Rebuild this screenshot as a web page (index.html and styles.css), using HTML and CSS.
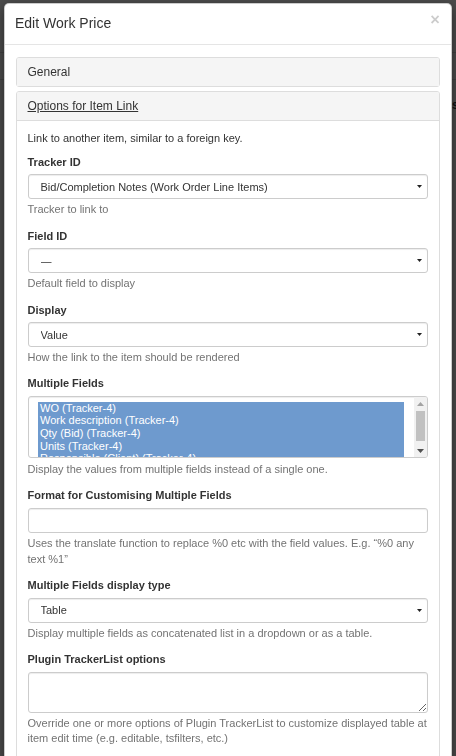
FILE: index.html
```html
<!DOCTYPE html>
<html lang="en">
<head>
<meta charset="utf-8">
<title>Edit Work Price</title>
<link rel="stylesheet" href="styles.css">
</head>
<body>
<!-- tracker page underneath the dialog -->
<div class="page">
  <div class="page-row"></div>
  <div class="page-row"></div>
  <div class="page-col-head">s</div>
</div>
<div class="backdrop"></div>

<div class="modal">
  <div class="modal-header">
    <h4 class="modal-title">Edit Work Price</h4>
    <button class="close" type="button">×</button>
  </div>

  <div class="modal-body">
    <div class="panel">
      <div class="panel-heading">General</div>
    </div>

    <div class="panel">
      <div class="panel-heading panel-heading-open"><a href="#">Options for Item Link</a></div>
      <div class="panel-body">
        <p class="intro">Link to another item, similar to a foreign key.</p>

        <div class="form-group">
          <label class="control-label">Tracker ID</label>
          <div class="select-wrap">
            <select class="form-control select"><option>Bid/Completion Notes (Work Order Line Items)</option></select>
            <svg class="caret" width="5" height="3" viewBox="0 0 5 3"><path d="M0 0H5L2.5 3Z"/></svg>
          </div>
          <div class="help-block">Tracker to link to</div>
        </div>

        <div class="form-group">
          <label class="control-label">Field ID</label>
          <div class="select-wrap">
            <select class="form-control select"><option>—</option></select>
            <svg class="caret" width="5" height="3" viewBox="0 0 5 3"><path d="M0 0H5L2.5 3Z"/></svg>
          </div>
          <div class="help-block">Default field to display</div>
        </div>

        <div class="form-group">
          <label class="control-label">Display</label>
          <div class="select-wrap">
            <select class="form-control select"><option>Value</option></select>
            <svg class="caret" width="5" height="3" viewBox="0 0 5 3"><path d="M0 0H5L2.5 3Z"/></svg>
          </div>
          <div class="help-block">How the link to the item should be rendered</div>
        </div>

        <div class="form-group">
          <label class="control-label">Multiple Fields</label>
          <div class="listbox">
            <div class="listbox-options">
              <div class="option">WO (Tracker-4)</div>
              <div class="option">Work description (Tracker-4)</div>
              <div class="option">Qty (Bid) (Tracker-4)</div>
              <div class="option">Units (Tracker-4)</div>
              <div class="option">Responsible (Client) (Tracker-4)</div>
            </div>
            <div class="scrollbar">
              <div class="scroll-btn">
                <svg width="7" height="4" viewBox="0 0 7 4"><path class="arrow-off" d="M0 4H7L3.5 0Z"/></svg>
              </div>
              <div class="scroll-track"><div class="scroll-thumb"></div></div>
              <div class="scroll-btn">
                <svg width="7" height="4" viewBox="0 0 7 4"><path class="arrow-on" d="M0 0H7L3.5 4Z"/></svg>
              </div>
            </div>
          </div>
          <div class="help-block help-after-list">Display the values from multiple fields instead of a single one.</div>
        </div>

        <div class="form-group">
          <label class="control-label">Format for Customising Multiple Fields</label>
          <input class="form-control" type="text">
          <div class="help-block">Uses the translate function to replace %0 etc with the field values. E.g. “%0 any text %1”</div>
        </div>

        <div class="form-group">
          <label class="control-label">Multiple Fields display type</label>
          <div class="select-wrap">
            <select class="form-control select"><option>Table</option></select>
            <svg class="caret" width="5" height="3" viewBox="0 0 5 3"><path d="M0 0H5L2.5 3Z"/></svg>
          </div>
          <div class="help-block">Display multiple fields as concatenated list in a dropdown or as a table.</div>
        </div>

        <div class="form-group">
          <label class="control-label">Plugin TrackerList options</label>
          <textarea class="form-control textarea"></textarea>
          <div class="help-block">Override one or more options of Plugin TrackerList to customize displayed table at item edit time (e.g. editable, tsfilters, etc.)</div>
        </div>
      </div>
    </div>
  </div>
</div>
</body>
</html>
```

FILE: styles.css
```css
html, body {
  margin: 0;
  height: 100%;
  overflow: hidden;
}

body {
  font-family: "Liberation Sans", Arial, sans-serif;
  font-size: 11px;
  line-height: 15.7px;
  color: #333;
  background: #fff;
}

/* page under the dialog */
.page {
  position: fixed;
  inset: 0;
  background: #fff;
  padding-top: 52px;
}

.page-row {
  height: 26px;
  border-top: 1px solid #ddd;
}

.page-col-head {
  position: absolute;
  top: 98px;
  left: 452px;
  font-weight: bold;
  font-size: 12px;
  color: #333;
}

.backdrop {
  position: fixed;
  inset: 0;
  background: rgba(0, 0, 0, 0.7);
}

/* dialog */
.modal {
  position: relative;
  z-index: 2;
  width: 448px;
  box-sizing: border-box;
  margin: 3px 0 0 4px;
  background: #fff;
  border: 1px solid rgba(0, 0, 0, 0.2);
  border-radius: 5px;
  box-shadow: 0 4px 12px rgba(0, 0, 0, 0.5);
}

.modal-header {
  display: flex;
  justify-content: space-between;
  align-items: flex-start;
  padding: 9px 11px 11px 10px;
  border-bottom: 1px solid #e5e5e5;
}

.modal-title {
  margin: 0;
  font-size: 14px;
  line-height: 20px;
  font-weight: normal;
  color: #333;
}

.close {
  margin-top: -2px;
  padding: 0;
  border: 0;
  background: none;
  font-family: "Liberation Sans", Arial, sans-serif;
  font-size: 16.5px;
  font-weight: bold;
  line-height: 1;
  color: #000;
  opacity: 0.2;
}

.modal-body {
  padding: 11.5px 11px 11px 10.5px;
}

/* collapsible panels */
.panel {
  margin-bottom: 4px;
  border: 1px solid #ddd;
  border-radius: 3px;
  background: #fff;
}

.panel-heading {
  padding: 8px 11px;
  font-size: 12px;
  line-height: 12px;
  background: #f5f5f5;
  color: #333;
  border-radius: 2px 2px 0 0;
}

.panel-heading-open {
  border-bottom: 1px solid #ddd;
}

.panel-heading a {
  color: #333;
  text-decoration: underline;
}

.panel-body {
  padding: 10.5px 11px 11px;
}

.intro {
  margin: 0 0 8px;
}

/* form fields */
.form-group {
  margin-bottom: 10.5px;
}

.control-label {
  display: block;
  margin-bottom: 4px;
  font-weight: bold;
}

.form-control {
  display: block;
  width: 100%;
  height: 25px;
  box-sizing: border-box;
  margin: 0;
  padding: 0 9px;
  font-family: "Liberation Sans", Arial, sans-serif;
  font-size: 11px;
  color: #555;
  background: #fff;
  border: 1px solid #ccc;
  border-radius: 3px;
  box-shadow: inset 0 1px 1px rgba(0, 0, 0, 0.075);
}

.select-wrap {
  position: relative;
}

.select {
  -webkit-appearance: none;
  appearance: none;
  padding: 0 20px 0 12px;
  color: #333;
}

.caret {
  position: absolute;
  right: 6px;
  top: 11px;
  fill: #222;
}

.textarea {
  height: 41px;
  padding: 5px 9px;
  resize: vertical;
}

.help-block {
  margin-top: 3px;
  color: #737373;
}

.help-after-list {
  margin-top: 4px;
}

/* multi-select list */
.listbox {
  display: flex;
  height: 62px;
  box-sizing: border-box;
  border: 1px solid #ccc;
  border-radius: 3px;
  overflow: hidden;
  box-shadow: inset 0 1px 1px rgba(0, 0, 0, 0.075);
}

.listbox-options {
  flex: 1;
  padding: 4.5px 10px 0 9.5px;
  overflow: hidden;
}

.option {
  padding-left: 2px;
  line-height: 12.7px;
  color: #fff;
  background: #6e9ace;
  white-space: nowrap;
}

.scrollbar {
  display: flex;
  flex-direction: column;
  width: 13px;
  background: #f1f1f1;
}

.scroll-btn {
  display: flex;
  align-items: center;
  justify-content: center;
  height: 13px;
}

.arrow-off {
  fill: #a3a3a3;
}

.arrow-on {
  fill: #505050;
}

.scroll-track {
  flex: 1;
  padding: 1px 2px 0;
}

.scroll-thumb {
  height: 30px;
  background: #c1c1c1;
}
```
